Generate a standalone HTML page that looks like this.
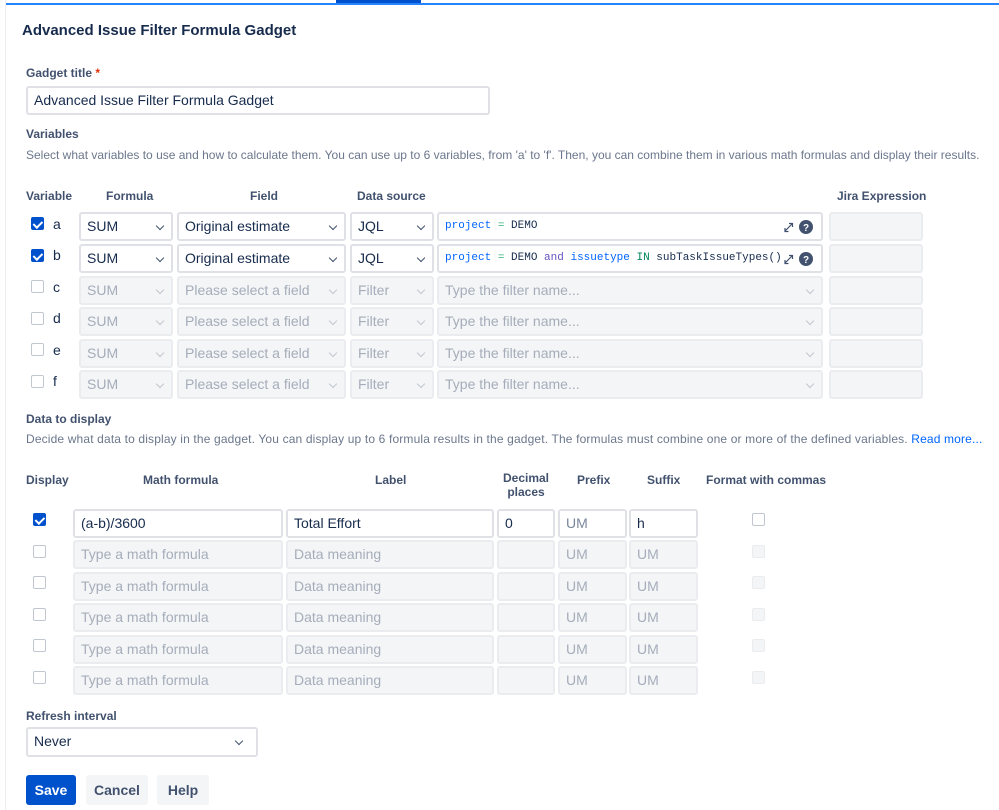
<!DOCTYPE html>
<html><head><meta charset="utf-8"><style>
*{box-sizing:border-box;margin:0;padding:0}
body{width:999px;height:810px;background:#fff;font-family:"Liberation Sans",sans-serif;color:#172b4d;position:relative;overflow:hidden}
.a{position:absolute;white-space:nowrap}
.h{font-weight:bold;font-size:12px;color:#42526e}
.hc{font-weight:bold;font-size:12px;color:#42526e;text-align:center}
.d{font-size:12px;color:#6b778c}
.in{position:absolute;height:29px;border:2px solid #dfe1e6;border-radius:3px;background:#fff;font-size:14px;line-height:25px;padding-left:6px;color:#172b4d;overflow:hidden}
.dis{background:#f4f5f7;border-color:#ebecf0;color:#a5adba}
.car{position:absolute;right:8px;top:9px;width:6px;height:6px;border-right:1.6px solid #42526e;border-bottom:1.6px solid #42526e;transform:rotate(45deg)}
.dis .car{border-color:#c1c7d0}
.cb{position:absolute;width:13px;height:13px;border:1.5px solid #c1c7d0;border-radius:2px;background:#fff}
.cb.on{background:#0052cc;border-color:#0052cc}
.cb.on:after{content:"";position:absolute;left:3px;top:0.5px;width:3.5px;height:7px;border-right:2px solid #fff;border-bottom:2px solid #fff;transform:rotate(45deg)}
.cb.g{background:#f4f5f7;border-color:#ebecf0}
.lt{font-size:14px;color:#172b4d}
.code{font-family:"Liberation Mono",monospace;font-size:11px}
.btn{position:absolute;top:775px;height:30px;border-radius:3px;font-size:14px;font-weight:bold;line-height:30px;text-align:center;background:#f4f5f7;color:#42526e}
</style></head><body>
<div class="a" style="left:5px;top:0;width:1px;height:810px;background:#ebecf0"></div>
<div class="a" style="left:6px;top:3px;width:993px;height:2px;background:#2684ff"></div>
<div class="a" style="left:336px;top:0;width:85px;height:3px;background:#0052cc"></div>

<div class="a" style="left:22px;top:22px;font-size:15px;font-weight:bold;color:#172b4d">Advanced Issue Filter Formula Gadget</div>
<div class="a h" style="left:26px;top:66px">Gadget title<span style="color:#de350b"> *</span></div>
<div class="in" style="left:26px;top:86px;width:464px">Advanced Issue Filter Formula Gadget</div>
<div class="a h" style="left:26px;top:127px">Variables</div>
<div class="a d" style="left:26px;top:148px">Select what variables to use and how to calculate them. You can use up to 6 variables, from 'a' to 'f'. Then, you can combine them in various math formulas and display their results.</div>

<div class="a h" style="left:26px;top:189px">Variable</div>
<div class="a h" style="left:106px;top:189px">Formula</div>
<div class="a h" style="left:250px;top:189px">Field</div>
<div class="a h" style="left:357px;top:189px">Data source</div>
<div class="a h" style="left:837px;top:189px">Jira Expression</div>

<div class="cb on" style="left:31px;top:217px"></div><div class="a lt" style="left:53px;top:216px">a</div>
<div class="in" style="left:79px;top:212px;width:94px">SUM<i class="car"></i></div>
<div class="in" style="left:177px;top:212px;width:169px">Original estimate<i class="car"></i></div>
<div class="in" style="left:350px;top:212px;width:84px">JQL<i class="car"></i></div>
<div class="in code" style="left:437px;top:212px;width:386px"><span style="color:#0065ff">project</span> <span style="color:#36b37e">=</span> DEMO</div>
<div class="in dis" style="left:829px;top:212px;width:94px"></div>

<div class="cb on" style="left:31px;top:249px"></div><div class="a lt" style="left:53px;top:247px">b</div>
<div class="in" style="left:79px;top:244px;width:94px">SUM<i class="car"></i></div>
<div class="in" style="left:177px;top:244px;width:169px">Original estimate<i class="car"></i></div>
<div class="in" style="left:350px;top:244px;width:84px">JQL<i class="car"></i></div>
<div class="in code" style="left:437px;top:244px;width:386px"><span style="color:#0065ff">project</span> <span style="color:#36b37e">=</span> DEMO <span style="color:#6554c0">and</span> <span style="color:#0065ff">issuetype</span> <span style="color:#00875a">IN</span> subTaskIssueTypes()</div>
<div class="in dis" style="left:829px;top:244px;width:94px"></div>

<svg class="a" style="left:782px;top:219px" width="40" height="50" viewBox="0 0 40 50">
<g stroke="#42526e" stroke-width="1.2" fill="none"><path d="M3 12L10 5M7 4.5h3.5V8M3 9v3.5h3.5"/><path d="M3 44L10 37M7 36.5h3.5V40M3 41v3.5h3.5"/></g>
<circle cx="24" cy="8" r="7" fill="#42526e"/><circle cx="24" cy="40" r="7" fill="#42526e"/>
<text x="24" y="12" font-size="10" font-weight="bold" fill="#fff" text-anchor="middle" font-family="Liberation Sans">?</text>
<text x="24" y="44" font-size="10" font-weight="bold" fill="#fff" text-anchor="middle" font-family="Liberation Sans">?</text>
</svg>

<div class="cb" style="left:31px;top:280px"></div><div class="a lt" style="left:53px;top:279px">c</div>
<div class="in dis" style="left:79px;top:276px;width:94px">SUM<i class="car"></i></div>
<div class="in dis" style="left:177px;top:276px;width:169px">Please select a field<i class="car"></i></div>
<div class="in dis" style="left:350px;top:276px;width:84px">Filter<i class="car"></i></div>
<div class="in dis" style="left:437px;top:276px;width:386px">Type the filter name...<i class="car"></i></div>
<div class="in dis" style="left:829px;top:276px;width:94px"></div>

<div class="cb" style="left:31px;top:312px"></div><div class="a lt" style="left:53px;top:310px">d</div>
<div class="in dis" style="left:79px;top:307px;width:94px">SUM<i class="car"></i></div>
<div class="in dis" style="left:177px;top:307px;width:169px">Please select a field<i class="car"></i></div>
<div class="in dis" style="left:350px;top:307px;width:84px">Filter<i class="car"></i></div>
<div class="in dis" style="left:437px;top:307px;width:386px">Type the filter name...<i class="car"></i></div>
<div class="in dis" style="left:829px;top:307px;width:94px"></div>

<div class="cb" style="left:31px;top:343px"></div><div class="a lt" style="left:53px;top:342px">e</div>
<div class="in dis" style="left:79px;top:339px;width:94px">SUM<i class="car"></i></div>
<div class="in dis" style="left:177px;top:339px;width:169px">Please select a field<i class="car"></i></div>
<div class="in dis" style="left:350px;top:339px;width:84px">Filter<i class="car"></i></div>
<div class="in dis" style="left:437px;top:339px;width:386px">Type the filter name...<i class="car"></i></div>
<div class="in dis" style="left:829px;top:339px;width:94px"></div>

<div class="cb" style="left:31px;top:375px"></div><div class="a lt" style="left:53px;top:373px">f</div>
<div class="in dis" style="left:79px;top:370px;width:94px">SUM<i class="car"></i></div>
<div class="in dis" style="left:177px;top:370px;width:169px">Please select a field<i class="car"></i></div>
<div class="in dis" style="left:350px;top:370px;width:84px">Filter<i class="car"></i></div>
<div class="in dis" style="left:437px;top:370px;width:386px">Type the filter name...<i class="car"></i></div>
<div class="in dis" style="left:829px;top:370px;width:94px"></div>

<div class="a h" style="left:26px;top:412px">Data to display</div>
<div class="a d" style="left:26px;top:432px;letter-spacing:0.15px">Decide what data to display in the gadget. You can display up to 6 formula results in the gadget. The formulas must combine one or more of the defined variables. <span style="color:#0065ff">Read more...</span></div>

<div class="a h" style="left:26px;top:473px">Display</div>
<div class="a h" style="left:143px;top:473px">Math formula</div>
<div class="a h" style="left:375px;top:473px">Label</div>
<div class="a hc" style="left:497px;top:471px;width:58px;line-height:14px;white-space:normal">Decimal places</div>
<div class="a h" style="left:577px;top:473px">Prefix</div>
<div class="a h" style="left:647px;top:473px">Suffix</div>
<div class="a h" style="left:706px;top:473px">Format with commas</div>

<div class="cb on" style="left:33px;top:513px"></div>
<div class="in" style="left:73px;top:509px;width:210px">(a-b)/3600</div>
<div class="in" style="left:286px;top:509px;width:208px">Total Effort</div>
<div class="in" style="left:497px;top:509px;width:58px">0</div>
<div class="in" style="left:558px;top:509px;width:69px;color:#7a869a">UM</div>
<div class="in" style="left:629px;top:509px;width:69px">h</div>
<div class="cb" style="left:752px;top:513px"></div>

<div class="cb" style="left:33px;top:545px"></div>
<div class="in dis" style="left:73px;top:540px;width:210px">Type a math formula</div>
<div class="in dis" style="left:286px;top:540px;width:208px">Data meaning</div>
<div class="in dis" style="left:497px;top:540px;width:58px"></div>
<div class="in dis" style="left:558px;top:540px;width:69px">UM</div>
<div class="in dis" style="left:629px;top:540px;width:69px">UM</div>
<div class="cb g" style="left:752px;top:545px"></div>

<div class="cb" style="left:33px;top:576px"></div>
<div class="in dis" style="left:73px;top:572px;width:210px">Type a math formula</div>
<div class="in dis" style="left:286px;top:572px;width:208px">Data meaning</div>
<div class="in dis" style="left:497px;top:572px;width:58px"></div>
<div class="in dis" style="left:558px;top:572px;width:69px">UM</div>
<div class="in dis" style="left:629px;top:572px;width:69px">UM</div>
<div class="cb g" style="left:752px;top:576px"></div>

<div class="cb" style="left:33px;top:608px"></div>
<div class="in dis" style="left:73px;top:603px;width:210px">Type a math formula</div>
<div class="in dis" style="left:286px;top:603px;width:208px">Data meaning</div>
<div class="in dis" style="left:497px;top:603px;width:58px"></div>
<div class="in dis" style="left:558px;top:603px;width:69px">UM</div>
<div class="in dis" style="left:629px;top:603px;width:69px">UM</div>
<div class="cb g" style="left:752px;top:608px"></div>

<div class="cb" style="left:33px;top:639px"></div>
<div class="in dis" style="left:73px;top:635px;width:210px">Type a math formula</div>
<div class="in dis" style="left:286px;top:635px;width:208px">Data meaning</div>
<div class="in dis" style="left:497px;top:635px;width:58px"></div>
<div class="in dis" style="left:558px;top:635px;width:69px">UM</div>
<div class="in dis" style="left:629px;top:635px;width:69px">UM</div>
<div class="cb g" style="left:752px;top:639px"></div>

<div class="cb" style="left:33px;top:671px"></div>
<div class="in dis" style="left:73px;top:666px;width:210px">Type a math formula</div>
<div class="in dis" style="left:286px;top:666px;width:208px">Data meaning</div>
<div class="in dis" style="left:497px;top:666px;width:58px"></div>
<div class="in dis" style="left:558px;top:666px;width:69px">UM</div>
<div class="in dis" style="left:629px;top:666px;width:69px">UM</div>
<div class="cb g" style="left:752px;top:671px"></div>

<div class="a h" style="left:26px;top:709px">Refresh interval</div>
<div class="in" style="left:26px;top:727px;width:232px;height:30px">Never<i class="car" style="right:14px"></i></div>

<div class="btn" style="left:26px;width:50px;background:#0052cc;color:#fff">Save</div>
<div class="btn" style="left:86px;width:62px">Cancel</div>
<div class="btn" style="left:157px;width:52px">Help</div>
</body></html>
